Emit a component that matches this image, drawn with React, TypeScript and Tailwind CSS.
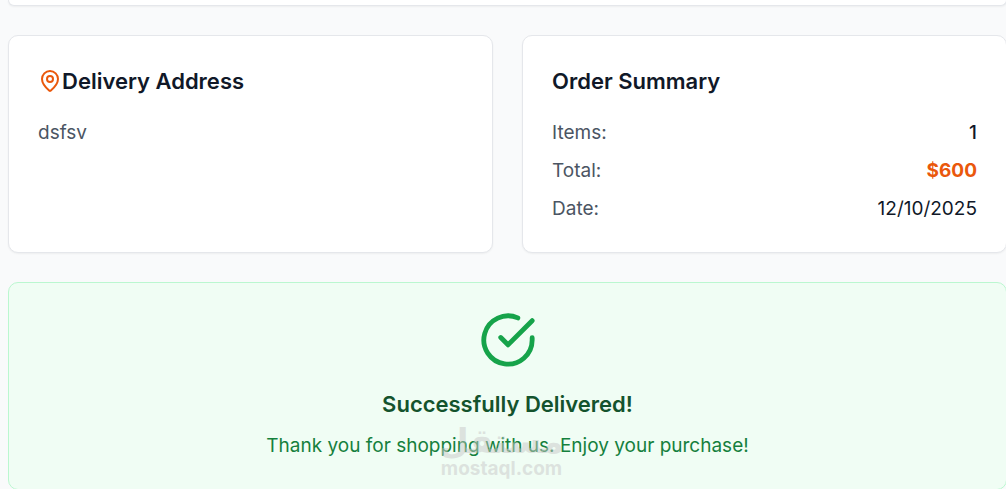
import { MapPin } from "lucide-react";

const summary = [
  { label: "Items:", value: "1", style: "font-medium text-gray-900" },
  { label: "Total:", value: "$600", style: "font-bold text-[#ea580c]" },
  { label: "Date:", value: "12/10/2025", style: "text-gray-900" },
];

const card = "rounded-[10px] border border-gray-200 bg-white p-[29px] shadow-xs";
const title = "text-[22px] font-semibold leading-8";

export default function App() {
  return (
    <main className="h-screen overflow-hidden bg-[#f9fafb] pl-2 font-['Inter',sans-serif] text-[19px] leading-[29px]">
      <div className="-mr-px flex flex-col gap-[29px]">
        {/* END OF THE PREVIOUS CARD */}
        <section className="h-[6px] rounded-b-[10px] border border-t-0 border-gray-200 bg-white shadow-xs" />

        <div className="grid grid-cols-2 gap-[29px]">
          {/* DELIVERY ADDRESS */}
          <section className={card}>
            <h2 className={`mb-[21px] flex items-center text-gray-900 ${title}`}>
              <MapPin className="size-6 text-[#ea580c]" />
              Delivery Address
            </h2>
            <p className="text-[#4b5563]">dsfsv</p>
          </section>

          {/* ORDER SUMMARY */}
          <section className={card}>
            <h2 className={`mb-[21px] text-gray-900 ${title}`}>Order Summary</h2>
            <dl className="flex flex-col gap-[9px]">
              {summary.map((row) => (
                <div key={row.label} className="flex justify-between">
                  <dt className="text-[#4b5563]">{row.label}</dt>
                  <dd className={row.style}>{row.value}</dd>
                </div>
              ))}
            </dl>
          </section>
        </div>

        {/* DELIVERED BANNER */}
        <section className="relative flex flex-col items-center rounded-[10px] border border-[#bbf7d0] bg-[#f0fdf4] px-[29px] pt-7 pb-[29px] text-center">
          <svg
            className="mb-[19px] size-[58px] text-[#16a34a]"
            viewBox="0 0 24 24"
            fill="none"
            stroke="currentColor"
            strokeWidth="2"
            strokeLinecap="round"
            strokeLinejoin="round"
            aria-hidden="true"
          >
            <path d="M22 11.08V12a10 10 0 1 1-5.93-9.14" />
            <path d="m9 11 3 3L22 4" />
          </svg>
          <h3 className={`mb-[11px] text-[#14532d] ${title}`}>
            Successfully Delivered!
          </h3>
          <p className="text-[#15803d]">
            Thank you for shopping with us. Enjoy your purchase!
          </p>

          {/* WATERMARK */}
          <div className="pointer-events-none absolute inset-x-0 bottom-2 flex flex-col items-center pr-3 font-bold text-[#c8c8c8]/50">
            <span
              dir="rtl"
              lang="ar"
              className="font-['DejaVu_Sans',sans-serif] text-[34px] leading-8"
            >
              مستقل
            </span>
            <span className="text-[19px] leading-6">mostaql.com</span>
          </div>
        </section>
      </div>
    </main>
  );
}
